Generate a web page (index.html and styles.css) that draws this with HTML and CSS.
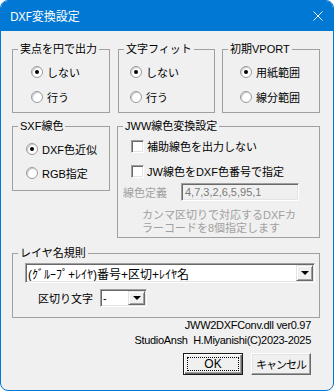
FILE: index.html
```html
<!DOCTYPE html>
<html lang="ja">
<head>
    <meta charset="utf-8">
    <title>DXF変換設定</title>
    <link rel="stylesheet" href="styles.css">
</head>
<body>
    <div class="window">
        <div class="title-bar">
            <span class="title">DXF変換設定</span>
            <svg class="close" width="10" height="10" viewBox="0 0 10 10">
                <path d="M0.5 0.5L9.5 9.5M9.5 0.5L0.5 9.5" stroke="#fff" stroke-width="1" fill="none"/>
            </svg>
        </div>
        <div class="content">
            <div class="row">
                <fieldset class="group g-point">
                    <legend>実点を円で出力</legend>
                    <div class="opts">
                        <div class="option"><span class="radio on"></span>しない</div>
                        <div class="option"><span class="radio"></span>行う</div>
                    </div>
                </fieldset>
                <fieldset class="group g-fit">
                    <legend>文字フィット</legend>
                    <div class="opts">
                        <div class="option"><span class="radio on"></span>しない</div>
                        <div class="option"><span class="radio"></span>行う</div>
                    </div>
                </fieldset>
                <fieldset class="group g-vport">
                    <legend>初期VPORT</legend>
                    <div class="opts">
                        <div class="option"><span class="radio on"></span>用紙範囲</div>
                        <div class="option"><span class="radio"></span>線分範囲</div>
                    </div>
                </fieldset>
            </div>
            <div class="row row-mid">
                <fieldset class="group g-sxf">
                    <legend>SXF線色</legend>
                    <div class="opts">
                        <div class="option"><span class="radio on"></span>DXF色近似</div>
                        <div class="option"><span class="radio"></span>RGB指定</div>
                    </div>
                </fieldset>
                <fieldset class="group g-jww">
                    <legend>JWW線色変換設定</legend>
                    <div class="opts">
                        <div class="option check-row"><span class="check"></span>補助線色を出力しない</div>
                        <div class="option check-row"><span class="check"></span>JW線色をDXF色番号で指定</div>
                    </div>
                    <div class="def-row">
                        <span class="def-label">線色定義</span>
                        <div class="def-input sunken">4,7,3,2,6,5,95,1</div>
                    </div>
                    <div class="note">カンマ区切りで対応するDXFカ<br>ラーコードを8個指定します</div>
                </fieldset>
            </div>
            <fieldset class="group g-layer">
                <legend>レイヤ名規則</legend>
                <div class="combo combo-wide sunken">
                    <span class="combo-text">(ｸﾞﾙｰﾌﾟ+ﾚｲﾔ)番号+区切+ﾚｲﾔ名</span>
                    <span class="drop"></span>
                </div>
                <div class="sep-row">
                    <span class="sep-label">区切り文字</span>
                    <div class="combo combo-small sunken">
                        <span class="combo-text">-</span>
                        <span class="drop"></span>
                    </div>
                </div>
            </fieldset>
            <div class="info">
                <div>JWW2DXFConv.dll ver0.97</div>
                <div>StudioAnsh&nbsp;&nbsp;H.Miyanishi(C)2023-2025</div>
            </div>
            <div class="buttons">
                <div class="btn btn-default">OK</div>
                <div class="btn btn-cancel">キャンセル</div>
            </div>
        </div>
    </div>
</body>
</html>
```
FILE: styles.css
```css
* {
    box-sizing: border-box;
}
body {
    margin: 0;
    background: #fff;
    font-family: "Liberation Sans", "Noto Sans CJK JP", sans-serif;
    font-size: 11px;
    color: #000;
}
.window {
    width: 334px;
    height: 391px;
    border: 1px solid #0078d4;
    border-radius: 8px;
    overflow: hidden;
    background: #f0f0f0;
    display: flex;
    flex-direction: column;
}
.title-bar {
    height: 30px;
    flex: none;
    background: #0078d4;
    color: #fff;
    display: flex;
    align-items: center;
    justify-content: space-between;
    padding: 0 10px 0 9px;
}
.title {
    font-family: "Noto Sans", "Noto Sans CJK JP", sans-serif;
    font-size: 12px;
}
.content {
    padding: 11px 12px 0 11px;
}
.row {
    display: flex;
    align-items: flex-start;
}
.row-mid {
    margin-top: 6px;
}
.group {
    margin: 0;
    padding: 0;
    min-width: 0;
    border: 1px solid #a0a0a0;
}
.group legend {
    margin-left: 5px;
    padding: 0 2px;
    line-height: 14px;
}
.opts {
    display: flex;
    flex-direction: column;
}
.option {
    display: flex;
    align-items: center;
    height: 20px;
    gap: 4px;
    white-space: nowrap;
}
.radio {
    position: relative;
    flex: none;
    width: 12px;
    height: 12px;
    border-radius: 50%;
    background: #fff;
    border: 1px solid #9a9a9a;
    box-shadow: inset 1px 1px 1px #c8c8c8;
}
.radio.on::after {
    content: "";
    position: absolute;
    left: 3px;
    top: 3px;
    width: 4px;
    height: 4px;
    border-radius: 50%;
    background: #000;
}
.check {
    flex: none;
    width: 13px;
    height: 13px;
    background: #fff;
    border: 1px solid;
    border-color: #a0a0a0 #fff #fff #a0a0a0;
    box-shadow: inset 1px 1px 0 #696969, inset -1px -1px 0 #e3e3e3;
}
.sunken {
    border: 1px solid;
    border-color: #a0a0a0 #fff #fff #a0a0a0;
    box-shadow: inset 1px 1px 0 #696969, inset -1px -1px 0 #e3e3e3;
}

/* first row */
.g-point, .g-vport {
    width: 98px;
    height: 71px;
}
.g-fit {
    width: 97px;
    height: 71px;
    margin-left: 8px;
}
.g-vport {
    margin-left: 7px;
}
.g-point .opts {
    padding: 6px 0 0 18px;
    gap: 5px;
}
.g-fit .opts {
    padding: 6px 0 0 11px;
    gap: 5px;
}
.g-vport .opts {
    padding: 6px 0 0 17px;
    gap: 5px;
}

/* second row */
.g-sxf {
    width: 98px;
    height: 72px;
}
.g-sxf .opts {
    padding: 6px 0 0 13px;
    gap: 4px;
}
.g-jww {
    width: 203px;
    height: 119px;
    margin-left: 7px;
}
.g-jww .opts {
    padding: 3px 0 0 13px;
    gap: 5px;
}
.check-row {
    gap: 3px;
}
.def-row {
    display: flex;
    align-items: center;
    margin-top: 2px;
    padding-left: 5px;
}
.def-label {
    width: 58px;
    color: #a0a0a0;
}
.def-input {
    width: 118px;
    height: 18px;
    padding: 0 3px;
    line-height: 16px;
    color: #7a7a7a;
    background: #f0f0f0;
}
.note {
    margin-top: 8px;
    padding-left: 24px;
    line-height: 13px;
    color: #a0a0a0;
    white-space: nowrap;
}

/* layer naming */
.g-layer {
    width: 308px;
    height: 72px;
    margin-top: 8px;
}
.combo {
    display: flex;
    background: #fff;
    padding: 1px;
}
.combo-wide {
    width: 290px;
    height: 20px;
    margin: 3px 0 0 12px;
}
.combo-small {
    width: 47px;
    height: 18px;
}
.combo-text {
    flex: 1;
    padding-left: 1px;
    display: flex;
    align-items: center;
    white-space: nowrap;
    overflow: hidden;
}
.combo-wide .combo-text {
    font-size: 12px;
}
.drop {
    flex: none;
    width: 17px;
    display: flex;
    align-items: center;
    justify-content: center;
    background: #f0f0f0;
    border: 1px solid;
    border-color: #e3e3e3 #696969 #696969 #e3e3e3;
    box-shadow: inset 1px 1px 0 #fff, inset -1px -1px 0 #a0a0a0;
}
.drop::after {
    content: "";
    border-left: 4px solid transparent;
    border-right: 4px solid transparent;
    border-top: 4px solid #000;
}
.sep-row {
    display: flex;
    align-items: center;
    margin-top: 6px;
    padding-left: 25px;
}
.sep-label {
    width: 62px;
}

/* footer */
.info {
    margin-right: 10px;
    text-align: right;
    line-height: 15px;
    letter-spacing: -0.3px;
}
.buttons {
    display: flex;
    justify-content: flex-end;
    gap: 8px;
    margin: 5px 10px 0 0;
}
.btn {
    position: relative;
    width: 60px;
    height: 22px;
    display: flex;
    align-items: center;
    justify-content: center;
    font-size: 12px;
    white-space: nowrap;
    background: #f0f0f0;
    border: 1px solid;
    border-color: #fff #696969 #696969 #fff;
    box-shadow: inset -1px -1px 0 #a0a0a0, inset 1px 1px 0 #e3e3e3;
}
.btn-cancel {
    font-size: 11px;
    letter-spacing: -1px;
}
.btn-default {
    border-color: #1a1a1a;
    box-shadow: inset 1px 1px 0 #fff, inset -1px -1px 0 #696969, inset -2px -2px 0 #a0a0a0;
}
.btn-default::after {
    content: "";
    position: absolute;
    left: 3px;
    top: 3px;
    right: 3px;
    bottom: 3px;
    border: 1px dotted #000;
}
```
